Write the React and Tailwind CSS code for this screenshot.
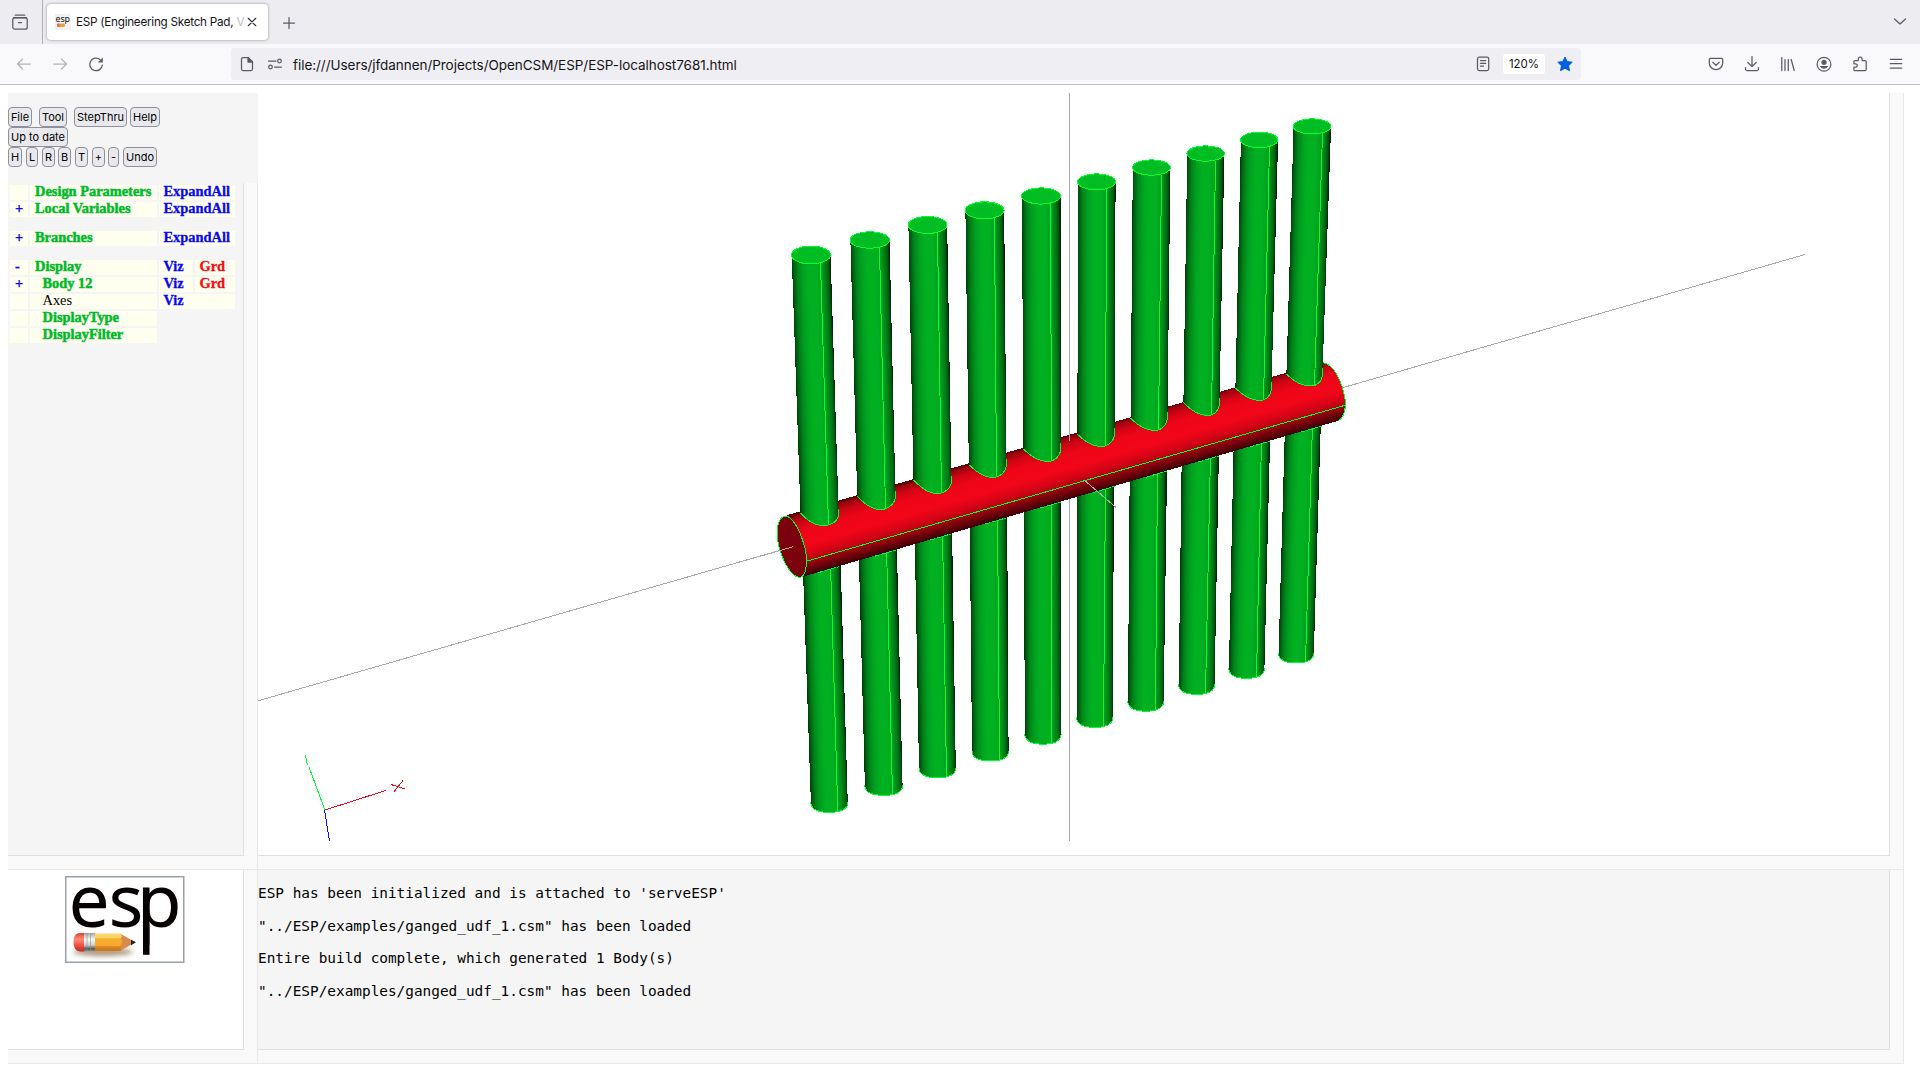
import React from "react";

const GREEN_EDGE = "#00ff30";

/* Upper rods: cap box, left / lowest / right points where the rod meets the tube, seam x at both ends. */
const upperRods = [
  { cap: [791.3, 831, 245.7, 264.2], l: [800.5, 513.2], b: [823.3, 525.5], r: [838.7, 514], s: [820.5, 828.5] },
  { cap: [850, 890, 231.4, 248.6], l: [857.2, 496.2], b: [880.6, 509.5], r: [895.5, 496], s: [879.5, 885.5] },
  { cap: [908, 947.6, 216.2, 233.8], l: [913.4, 480], b: [937.3, 493.5], r: [951.5, 480.6], s: [937.5, 941.5] },
  { cap: [965, 1004.6, 201.5, 219.2], l: [968.8, 464.6], b: [992.6, 477.5], r: [1006.5, 464], s: [994.5, 996.5] },
  { cap: [1021.5, 1061, 187.5, 204.5], l: [1023.4, 449], b: [1047.3, 461.5], r: [1060.8, 448], s: [1050.5, 1051.5] },
  { cap: [1077.5, 1116, 173.5, 190.2], l: [1077.4, 434.3], b: [1101, 446.5], r: [1114.6, 433.3], s: [1106.5, 1105.5] },
  { cap: [1132.4, 1170.8, 159.5, 175.6], l: [1130.6, 418.3], b: [1154.6, 430.5], r: [1167.5, 416.6], s: [1161.5, 1158.5] },
  { cap: [1186.8, 1224.8, 145.5, 161.6], l: [1183.4, 402.6], b: [1207, 415.5], r: [1219.5, 402.6], s: [1215.5, 1211.5] },
  { cap: [1240.5, 1278.5, 131.8, 148], l: [1235.4, 388], b: [1259.3, 400.5], r: [1271.5, 387.3], s: [1269.5, 1263.5] },
  { cap: [1293.2, 1331.5, 118.5, 134.3], l: [1286.4, 374], b: [1310.3, 386], r: [1322.5, 373.3], s: [1322.5, 1314.5] },
];

/* Lower rods: x of both sides at the tube and at the tip, lowest y, seam x at both ends. */
const lowerRods = [
  { t: [802.9, 840.8], e: [810.9, 847.8], y: 812.4, s: [830.5, 837.8], ty: 568 },
  { t: [858.7, 897], e: [864.9, 902.6], y: 795.4, s: [886.5, 892.5], ty: 551 },
  { t: [914.7, 952.2], e: [919, 955.8], y: 777.8, s: [942.5, 946.5], ty: 535 },
  { t: [969.7, 1007.2], e: [972, 1008.6], y: 761, s: [997.5, 999.5], ty: 519 },
  { t: [1023.7, 1061], e: [1024.9, 1061], y: 744.2, s: [1051.5, 1051.5], ty: 504 },
  { t: [1076.7, 1114], e: [1076.7, 1112.7], y: 727.4, s: [1105.5, 1103.5], ty: 488 },
  { t: [1129.7, 1167], e: [1127.9, 1163.7], y: 711.2, s: [1157.5, 1155.5], ty: 473 },
  { t: [1181.7, 1218.8], e: [1178.7, 1214.6], y: 694.4, s: [1210.5, 1205.5], ty: 458 },
  { t: [1233.7, 1270], e: [1228.9, 1264.4], y: 678.4, s: [1261.5, 1256.5], ty: 443 },
  { t: [1284.9, 1320.7], e: [1278.5, 1313.8], y: 663, s: [1312.5, 1305.5], ty: 428 },
];

/* Height of the tube's lower silhouette at a given x. */
const tubeBottom = (x) => 577 - 0.2913 * (x - 801.7);

function RodGradient({ id, x0, y0, x1, y1, w }) {
  const dx = x1 - x0;
  const dy = y1 - y0;
  const len = Math.hypot(dx, dy);
  const nx = dy / len;
  const ny = -dx / len;
  const mx = (x0 + x1) / 2;
  const my = (y0 + y1) / 2;
  return (
    <linearGradient id={id} gradientUnits="userSpaceOnUse" x1={mx} y1={my} x2={mx + nx * w} y2={my + ny * w}>
      <stop offset="0" stopColor="#003a08" />
      <stop offset="0.05" stopColor="#005c10" />
      <stop offset="0.14" stopColor="#008319" />
      <stop offset="0.27" stopColor="#00a01e" />
      <stop offset="0.42" stopColor="#00b021" />
      <stop offset="0.62" stopColor="#00b021" />
      <stop offset="0.76" stopColor="#00a01e" />
      <stop offset="0.88" stopColor="#007a17" />
      <stop offset="0.95" stopColor="#005a10" />
      <stop offset="1" stopColor="#002505" />
    </linearGradient>
  );
}

function UpperRod({ rod, id }) {
  const [x0, x1, y0, y1] = rod.cap;
  const cy = (y0 + y1) / 2;
  const { l, b, r, s } = rod;
  const curve = `C${l[0] + 6} ${l[1] + 6} ${b[0] - 10} ${b[1]} ${b[0]} ${b[1]}C${b[0] + 8} ${b[1]} ${r[0]} ${r[1] + 7} ${r[0]} ${r[1]}`;
  return (
    <g>
      <RodGradient id={id} x0={x0} y0={cy} x1={l[0]} y1={l[1]} w={(x1 - x0 + r[0] - l[0]) / 2} />
      <path d={`M${x0 + 0.4} ${cy}L${l[0]} ${l[1]}${curve}L${x1 - 0.4} ${cy}Z`} fill={`url(#${id})`} />
      <path d={`M${l[0]} ${l[1]}${curve}V${r[1] - 5}`} fill="none" stroke={GREEN_EDGE} />
      <path d={`M${s[0]} ${y1 - 1}L${s[1]} ${b[1] - 1}`} stroke={GREEN_EDGE} />
      <ellipse cx={(x0 + x1) / 2 - 0.2} cy={cy} rx={(x1 - x0) / 2 - 0.3} ry={(y1 - y0) / 2 - 0.3} fill="#00bd24" stroke={GREEN_EDGE} />
    </g>
  );
}

function LowerRod({ rod, id }) {
  const { t, e, y, s, ty } = rod;
  const sy = y - 9;
  const tip = `C${e[0] + 1} ${y - 2} ${e[0] + 9} ${y} ${(e[0] + e[1]) / 2} ${y}C${e[1] - 9} ${y} ${e[1] - 1} ${y - 2} ${e[1]} ${sy}`;
  return (
    <g>
      <RodGradient id={id} x0={t[0]} y0={ty} x1={e[0]} y1={sy} w={(t[1] - t[0] + e[1] - e[0]) / 2} />
      <path d={`M${t[0]} ${ty - 30}V${ty}L${e[0]} ${sy}${tip}L${t[1]} ${ty}V${ty - 30}Z`} fill={`url(#${id})`} />
      <path d={`M${e[0]} ${sy - 1}V${sy}${tip}V${sy - 1}`} fill="none" stroke={GREEN_EDGE} />
      <path d={`M${s[0]} ${ty - 5}L${s[1]} ${y - 1}`} stroke={GREEN_EDGE} />
    </g>
  );
}

function Viewport() {
  return (
    <svg className="block h-[762px] w-[1631px]" viewBox="258 93 1631 762" shapeRendering="crispEdges" fill="none">
      <defs>
        <linearGradient id="tube" gradientUnits="userSpaceOnUse" x1="1060" y1="437.2" x2="1077.5" y2="497.4">
          <stop offset="0" stopColor="#5a0006" />
          <stop offset="0.05" stopColor="#980310" />
          <stop offset="0.15" stopColor="#cf0414" />
          <stop offset="0.28" stopColor="#ec0518" />
          <stop offset="0.52" stopColor="#f20519" />
          <stop offset="0.66" stopColor="#d80416" />
          <stop offset="0.76" stopColor="#b80313" />
          <stop offset="0.84" stopColor="#84020d" />
          <stop offset="0.92" stopColor="#5e0109" />
          <stop offset="1" stopColor="#380004" />
        </linearGradient>
      </defs>
      <path d="M258 700.8L792.7 546.7M1343 387.6L1805 254.5M1069.5 93V441M1069.5 499V841" stroke="#a9a9a9" />
      {lowerRods.map((rod, i) => (
        <LowerRod key={i} rod={rod} id={`lower${i}`} />
      ))}
      <path
        d="M786.7 515.3L1323.3 362.3C1333 363.5 1342 380 1345.3 402C1346 411 1343 419 1338.3 420.7L801.7 577Z"
        fill="url(#tube)"
      />
      <path d="M1322.5 362.5C1333 363.5 1342 380 1345.3 400C1346 411 1343 419 1338 420.7" stroke={GREEN_EDGE} />
      <path d="M807.3 561L1345 405.3" stroke={GREEN_EDGE} />
      {lowerRods.map((rod, i) => (
        <path
          key={i}
          d={`M${rod.s[0] - 12} ${tubeBottom(rod.s[0] - 12) + 0.5}L${rod.s[0] + 9} ${tubeBottom(rod.s[0] + 9) + 0.5}`}
          stroke={GREEN_EDGE}
          strokeDasharray="5 1.5"
        />
      ))}
      {upperRods.map((rod, i) => (
        <UpperRod key={i} rod={rod} id={`upper${i}`} />
      ))}
      <path
        d="M784.5 516.3C775 519 775.5 540 782 556C787 569 795 579 801 577C807.5 575 808 556 803.5 543C799 528 791 514.5 784.5 516.3Z"
        fill="#7b020c"
        stroke={GREEN_EDGE}
      />
      <path d="M760 556.3L792.7 546.9M1069.5 434V441M1085 480.7L1115.7 507.3" stroke="#b0a9a9" />
      <path d="M305.3 755L307.5 765.5M309 767L324.7 809.5" stroke={GREEN_EDGE} />
      <path d="M325 810L385.7 790.5M391 784.5L405 789M393.5 792.5L403 780.5" stroke="#f50519" />
      <path d="M324.5 810L329.5 841" stroke="#0a12ff" />
    </svg>
  );
}

function Icon({ children, className = "h-4 w-4", ...rest }) {
  return (
    <svg
      viewBox="0 0 16 16"
      className={className}
      fill="none"
      stroke="currentColor"
      strokeWidth="1.25"
      strokeLinecap="round"
      strokeLinejoin="round"
      {...rest}
    >
      {children}
    </svg>
  );
}

function NavButton({ children, faded }) {
  return (
    <div className={faded ? "flex w-9 justify-center text-[#b4b3b9]" : "flex w-9 justify-center text-[#5b5b66]"}>
      <Icon>{children}</Icon>
    </div>
  );
}

function TabBar() {
  return (
    <div className="flex h-11 bg-[#ededf1] text-[#5b5b66]">
      <div className="flex w-[43px] items-center border-r border-[#b0afb6] pl-3">
        <Icon>
          <path d="M3.2 1.2H12.8M1.5 3.7H14.5" />
          <rect x="0.8" y="3.8" width="14.4" height="11.4" rx="2" />
          <path d="M6.5 8.7H9.5" />
        </Icon>
      </div>
      <div className="ml-1 mt-1 flex h-9 w-[221px] items-center rounded bg-white pl-2 shadow-[0_0_3px_rgba(0,0,0,0.4)]">
        <svg viewBox="0 0 16 16" className="h-4 w-4 shrink-0 overflow-visible">
          <rect width="16" height="16" fill="#f3f2f2" />
          <text x="0.5" y="8" fontFamily="Noto Sans" fontSize="9" textLength="14.5" lengthAdjust="spacingAndGlyphs" fill="#111">
            esp
          </text>
          <rect x="2.5" y="9.5" width="7.5" height="3.5" rx="1.5" fill="#eda13a" />
          <rect x="2" y="9.5" width="2.5" height="3.5" rx="1" fill="#e0665a" />
        </svg>
        <div className="ml-[5px] w-[168px] pt-0.5 whitespace-nowrap font-[Inter,sans-serif] text-[11.7px] tracking-[-0.25px] text-[#15141a]">
          ESP (Engineering Sketch Pad, <span className="text-[#bdbdc2]">V</span>
        </div>
        <Icon className="ml-0.5 h-3 w-3 shrink-0 text-[#2b2a33]" strokeWidth="1.5">
          <path d="M3 3L13 13M13 3L3 13" />
        </Icon>
      </div>
      <Icon className="ml-[13px] mt-[15px] h-4 w-4">
        <path d="M8 2.5V13.5M2.5 8H13.5" />
      </Icon>
      <Icon className="ml-auto mr-3 mt-[13px] h-4 w-4">
        <path d="M2.5 6L8 11L13.5 6" />
      </Icon>
    </div>
  );
}

function NavBar() {
  return (
    <div className="flex h-[41px] items-center border-b border-[#c2c1c7] bg-[#f9f9fb] pl-1.5 text-[#5b5b66]">
      <NavButton faded>
        <path d="M14.5 8H1.5M6.5 3L1.5 8L6.5 13" />
      </NavButton>
      <NavButton faded>
        <path d="M1.5 8H14.5M9.5 3L14.5 8L9.5 13" />
      </NavButton>
      <NavButton>
        <path d="M14.3 9A6.3 6.3 0 1 1 12 3.5" />
        <path d="M14.8 1.5V6.5H9.8Z" fill="currentColor" stroke="none" />
      </NavButton>
      <div className="ml-[117px] flex h-8 w-[1350px] items-center rounded bg-[#efeef2]">
        <Icon className="ml-2 h-4 w-4">
          <path d="M4 1.5H9L13.5 6V13Q13.5 14.5 12 14.5H4Q2.5 14.5 2.5 13V3Q2.5 1.5 4 1.5Z" />
          <path d="M9 1.5V6H13.5Z" fill="currentColor" />
        </Icon>
        <Icon className="ml-3 h-4 w-4">
          <path d="M1.5 5H9M7.5 11H14.5" />
          <circle cx="12.5" cy="5" r="1.8" />
          <circle cx="3.5" cy="11" r="1.8" />
        </Icon>
        <span className="ml-[10px] pt-0.5 whitespace-nowrap font-[Inter,sans-serif] text-[13.5px] tracking-[-0.05px] text-[#15141a]">
          file:///Users/jfdannen/Projects/OpenCSM/ESP/ESP-localhost7681.html
        </span>
        <Icon className="ml-auto h-4 w-4">
          <rect x="2.5" y="1.2" width="11.2" height="13.4" rx="1.8" />
          <path d="M5.5 4.5H10.7M5.5 7.3H10.7M5.5 10.2H8.5" />
        </Icon>
        <span className="ml-3 flex h-5 w-[42px] items-center justify-center rounded-[3px] bg-white pt-0.5 font-[Inter,sans-serif] text-[11.5px] text-[#15141a]">
          120%
        </span>
        <svg viewBox="0 0 16 16" className="ml-3 mr-2 h-4 w-4">
          <path
            d="M8 1L10.2 5.6L15.2 6.2L11.5 9.7L12.5 14.7L8 12.2L3.5 14.7L4.5 9.7L0.8 6.2L5.8 5.6Z"
            fill="#0060df"
            stroke="#0060df"
            strokeLinejoin="round"
          />
        </svg>
      </div>
      <div className="ml-[117px] flex">
        <NavButton>
          <path d="M2.5 2.3H13.5Q14.7 2.3 14.7 3.5V7A6.7 6.7 0 0 1 1.3 7V3.5Q1.3 2.3 2.5 2.3Z" />
          <path d="M4.8 6.3L8 9.3L11.2 6.3" />
        </NavButton>
        <NavButton>
          <path d="M8 0.5V10.5M3.8 6.5L8 10.5L12.2 6.5M1.5 11.5V13Q1.5 14.5 3 14.5H13Q14.5 14.5 14.5 13V11.5" />
        </NavButton>
        <NavButton>
          <path d="M1.8 1.5V14.5M5 3.5V14.5M8.3 3.5V14.5M11.2 3.5L14.2 14.5" />
        </NavButton>
        <NavButton>
          <circle cx="8" cy="8.2" r="6.9" />
          <circle cx="8" cy="6.3" r="2.6" fill="currentColor" stroke="none" />
          <path d="M3.8 10H12.2Q11 12.8 8 12.8T3.8 10Z" fill="currentColor" stroke="none" />
        </NavButton>
        <NavButton>
          <path d="M3 4.5H6.3V3A1.9 1.9 0 0 1 10.1 3V4.5H13Q14.2 4.5 14.2 5.7V13.5Q14.2 14.7 13 14.7H3Q1.9 14.7 1.9 13.5V11.2H3.5A1.7 1.7 0 0 0 3.5 7.8H1.9V5.7Q1.9 4.5 3 4.5Z" />
        </NavButton>
        <NavButton>
          <path d="M2.3 3.3H13.7M2.3 7.7H13.7M2.3 12.2H13.7" />
        </NavButton>
      </div>
    </div>
  );
}

function Btn({ children, className }) {
  return (
    <button
      className={
        "flex h-5 shrink-0 items-center justify-center whitespace-nowrap rounded border border-[#8f8f9d] bg-[#e9e9ed] font-[Inter,sans-serif] text-[11px] leading-none text-black " +
        className
      }
    >
      {children}
    </button>
  );
}

function Cell({ children, className }) {
  return <div className={"h-[15px] bg-[#fffff0] text-[14.4px] leading-[12px] whitespace-pre " + className}>{children}</div>;
}

function Row({ sign, label, plain, sub, actions = [], gap }) {
  return (
    <div className={gap ? "mt-[12px] flex gap-0.5" : "flex gap-0.5"}>
      <Cell className="w-[18px] pl-[5px] font-bold text-[#0a0af0] [-webkit-text-stroke:0.3px_#0a0af0]">{sign}</Cell>
      <Cell
        className={
          (sub ? "w-[127px] pl-[12.5px] " : "w-[127px] pl-[5px] ") +
          (plain ? "text-black" : "font-bold text-[#00b929] [-webkit-text-stroke:0.5px_#00b929]")
        }
      >
        {label}
      </Cell>
      {actions.length === 1 && (
        <Cell className="w-[76px] pl-[4.5px] font-bold text-[#0a0af0] [-webkit-text-stroke:0.3px_#0a0af0]">{actions[0]}</Cell>
      )}
      {actions.length === 2 && (
        <>
          <Cell className="w-[34px] pl-[4.5px] font-bold text-[#0a0af0] [-webkit-text-stroke:0.3px_#0a0af0]">{actions[0]}</Cell>
          <Cell className="w-[40px] pl-[4.5px] font-bold text-[#f50a14] [-webkit-text-stroke:0.3px_#f50a14]">{actions[1]}</Cell>
        </>
      )}
    </div>
  );
}

function EspLogo() {
  return (
    <svg viewBox="0 0 120 87" className="h-[87px] w-[120px] overflow-visible">
      <defs>
        <linearGradient id="wood" x1="0" y1="0" x2="0" y2="1">
          <stop offset="0" stopColor="#fbd667" />
          <stop offset="0.25" stopColor="#fbd667" />
          <stop offset="0.3" stopColor="#f8b02e" />
          <stop offset="0.7" stopColor="#f6a92c" />
          <stop offset="0.75" stopColor="#d98822" />
          <stop offset="1" stopColor="#c9751d" />
        </linearGradient>
        <linearGradient id="rubber" x1="0" y1="0" x2="0" y2="1">
          <stop offset="0" stopColor="#d8452f" />
          <stop offset="0.35" stopColor="#ff8a78" />
          <stop offset="0.7" stopColor="#ee4b3c" />
          <stop offset="1" stopColor="#b82c20" />
        </linearGradient>
        <linearGradient id="metal" x1="0" y1="0" x2="0" y2="1">
          <stop offset="0" stopColor="#a5a5a5" />
          <stop offset="0.35" stopColor="#fafafa" />
          <stop offset="0.65" stopColor="#cfcfcf" />
          <stop offset="0.85" stopColor="#565656" />
          <stop offset="1" stopColor="#999" />
        </linearGradient>
        <filter id="soft" x="-20%" y="-100%" width="140%" height="300%">
          <feGaussianBlur stdDeviation="2.5" />
        </filter>
      </defs>
      <rect x="0.75" y="0.75" width="118" height="85.5" fill="#fff" stroke="#9aa1a7" strokeWidth="1.5" />
      <text x="3.4 43.4 71.8" y="51" fontFamily="Noto Sans, sans-serif" fontSize="73" fill="#060000">
        esp
      </text>
      {/* long stem of the p */}
      <rect x="78" y="11.5" width="6.5" height="67.3" fill="#060000" />
      <ellipse cx="38" cy="76" rx="30" ry="4" fill="#8a6c4a" opacity="0.7" filter="url(#soft)" />
      <path d="M20 57H15Q8.5 57 8.5 66T15 75.5H20Z" fill="url(#rubber)" />
      <rect x="19" y="57" width="11" height="18.5" fill="url(#metal)" />
      <path d="M22 57V75M25.5 57V75" stroke="#8b8b8b" strokeWidth="0.6" />
      <path d="M30 57.5H56L58 66L56 75H30Z" fill="url(#wood)" />
      <path d="M55 57.5L70.5 66.3L55 75Q58.5 71 55.5 69Q58.5 66 55.5 62.5Q58 60 55 57.5Z" fill="#d98b4d" />
      <path d="M66 63.7L71 66.3L66 69.2Z" fill="#26242a" />
    </svg>
  );
}

function Sidebar() {
  return (
    <div className="w-[250px] shrink-0">
      <div className="h-[90px] bg-[#f5f5f5] pt-[14px]">
        <div className="flex">
          <Btn className="w-6">File</Btn>
          <Btn className="ml-[7px] w-7">Tool</Btn>
          <Btn className="ml-[7px] w-[53px]">StepThru</Btn>
          <Btn className="ml-[3px] w-[30px]">Help</Btn>
        </div>
        <div className="flex">
          <Btn className="w-[60px]">Up to date</Btn>
        </div>
        <div className="flex">
          <Btn className="w-[14px]">H</Btn>
          <Btn className="ml-1 w-3">L</Btn>
          <Btn className="ml-1 w-[13px]">R</Btn>
          <Btn className="ml-[3px] w-[13px]">B</Btn>
          <Btn className="ml-1 w-[13px]">T</Btn>
          <Btn className="ml-1 w-[13px]">+</Btn>
          <Btn className="ml-[3px] w-[11px]">-</Btn>
          <Btn className="ml-1 w-[34px]">Undo</Btn>
        </div>
      </div>
      <div className="h-[687px] border-b border-r border-[#e8e8e8] bg-[#f9f9f9]">
        <div className="flex h-[673px] w-[236px] flex-col gap-0.5 border-b border-r border-[#e0e0e0] bg-[#f5f5f5] pl-0.5 pt-0.5 font-['Liberation_Serif',serif]">
          <Row label="Design Parameters" actions={["ExpandAll"]} />
          <Row sign="+" label="Local Variables" actions={["ExpandAll"]} />
          <Row gap sign="+" label="Branches" actions={["ExpandAll"]} />
          <Row gap sign="-" label="Display" actions={["Viz", "Grd"]} />
          <Row sign="+" sub label="Body 12" actions={["Viz", "Grd"]} />
          <Row sub plain label="Axes" actions={["Viz"]} />
          <Row sub label="DisplayType" />
          <Row sub label="DisplayFilter" />
        </div>
      </div>
      <div className="h-[194px] border-b border-r border-[#e8e8e8] bg-[#f9f9f9]">
        <div className="h-[180px] w-[236px] border-b border-r border-[#e0e0e0] bg-white pl-[57px] pt-[6px]">
          <EspLogo />
        </div>
      </div>
    </div>
  );
}

const messages = [
  "ESP has been initialized and is attached to 'serveESP'",
  '"../ESP/examples/ganged_udf_1.csm" has been loaded',
  "Entire build complete, which generated 1 Body(s)",
  '"../ESP/examples/ganged_udf_1.csm" has been loaded',
];

export default function App() {
  return (
    <div className="h-[1080px] w-[1920px] overflow-hidden bg-white">
      <TabBar />
      <NavBar />
      <div className="flex pl-2 pt-2">
        <Sidebar />
        <div className="w-[1646px] shrink-0">
          <div className="h-[777px] border-b border-r border-[#e8e8e8] bg-[#f9f9f9]">
            <div className="h-[763px] w-[1632px] border-b border-r border-[#e0e0e0] bg-white">
              <Viewport />
            </div>
          </div>
          <div className="h-[194px] border-b border-r border-[#e8e8e8] bg-[#f9f9f9]">
            <div className="flex h-[180px] w-[1632px] flex-col border-b border-r border-[#e0e0e0] bg-[#f5f5f5] pt-[7px] font-['DejaVu_Sans_Mono',monospace] text-[14.4px] leading-[32.6px] text-black">
              {messages.map((m, i) => (
                <div key={i} className="whitespace-pre">{m}</div>
              ))}
            </div>
          </div>
        </div>
      </div>
    </div>
  );
}
